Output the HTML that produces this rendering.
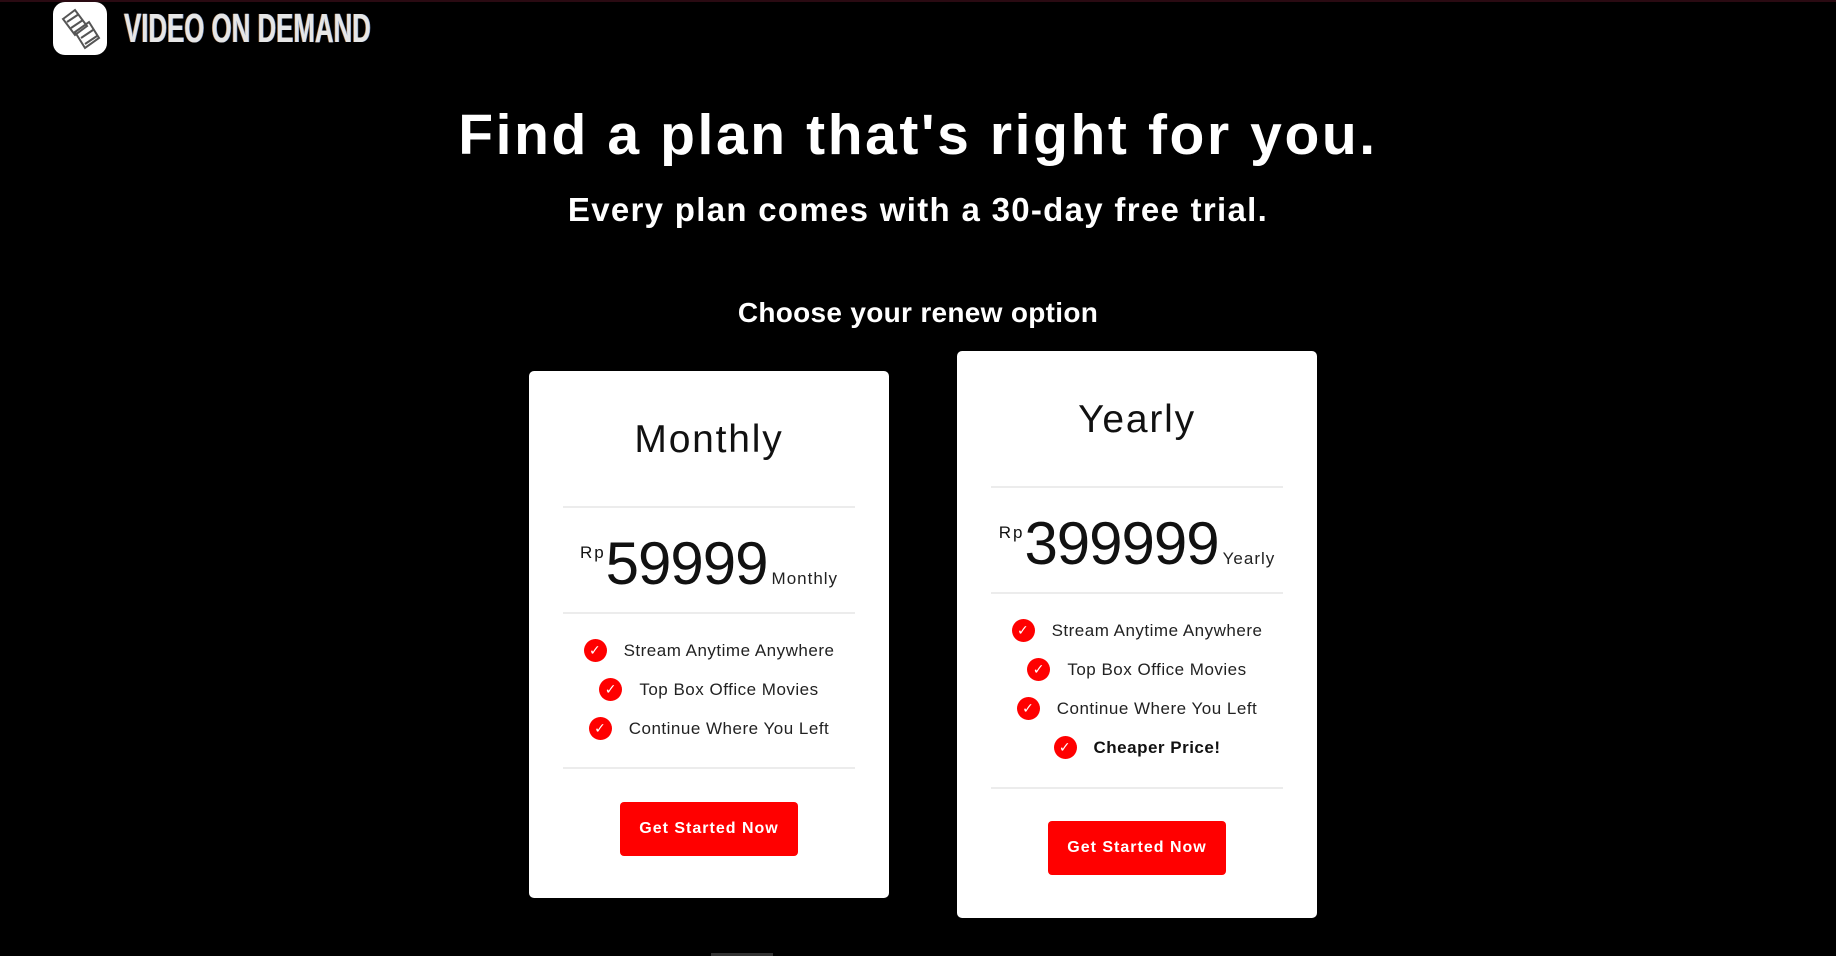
<!DOCTYPE html>
<html><head><meta charset="utf-8"><style>
*{margin:0;padding:0;box-sizing:border-box}
html,body{width:1836px;height:956px;background:#000;overflow:hidden;font-family:"Liberation Sans","DejaVu Sans",sans-serif}
.topline{position:absolute;left:0;top:0;width:1836px;height:2px;background:#2a0a12}
.logo{position:absolute;left:53px;top:2px;width:54px;height:53px;background:#fff;border-radius:12px}
.brand{position:absolute;left:124px;top:5px;font-size:41px;font-weight:bold;color:#e6e6e6;transform:scaleX(0.63);transform-origin:left top;white-space:nowrap;text-shadow:1px 0 #6b8cc0,-1px 0 #a07040}
.c{position:absolute;left:0;width:1836px;text-align:center;color:#fff;white-space:nowrap}
.h1{top:102px;font-size:57px;font-weight:bold;letter-spacing:2.6px}
.h2{top:191px;font-size:33px;font-weight:bold;letter-spacing:1.3px}
.h3{top:297px;font-size:28px;font-weight:bold;letter-spacing:0.3px}
.card{position:absolute;background:#fff;border-radius:5px;width:360px}
.card .t{position:absolute;top:47px;left:0;width:100%;text-align:center;font-size:39px;line-height:44px;color:#111;letter-spacing:1.8px}
.hr{position:absolute;left:34px;right:34px;height:2px;background:#ececec}
.price{position:absolute;top:152px;left:0;width:100%;text-align:center;color:#111;white-space:nowrap;line-height:60px}
.price .rp{font-size:17px;vertical-align:26px;letter-spacing:2px}
.price .n{font-size:60px;letter-spacing:-1px}
.price .p{font-size:17px;letter-spacing:1px;margin-left:4px;color:#222}
.feat{position:absolute;left:0;width:100%;height:39px;display:flex;justify-content:center;align-items:center;font-size:17px;color:#222;letter-spacing:0.5px}
.ic{width:23px;height:23px;border-radius:50%;background:#f00;color:#fff;font-size:14px;display:flex;align-items:center;justify-content:center;margin-right:17px}
.btn{position:absolute;left:91px;width:178px;height:54px;background:#f00;border-radius:4px;color:#fff;font-weight:bold;font-size:16px;letter-spacing:1px;display:flex;align-items:center;justify-content:center}
.bar{position:absolute;left:711px;top:953px;width:62px;height:3px;background:#333}
</style></head><body>
<div class="topline"></div>
<div class="logo"><svg width="54" height="53" viewBox="0 0 54 53"><g fill="none" stroke="#555" stroke-width="2"><path d="M10 17 L22 8 L34 24 L22 33 Z"/><path d="M22 30 L36 20 L46 36 L32 46 Z"/><path d="M14 20 L26 12 M18 26 L30 18 M28 36 L40 28 M32 42 L44 34"/></g></svg></div>
<div class="brand">VIDEO ON DEMAND</div>
<div class="c h1">Find a plan that's right for you.</div>
<div class="c h2">Every plan comes with a 30-day free trial.</div>
<div class="c h3">Choose your renew option</div>

<div class="card" style="left:529px;top:371px;height:527px">
<div class="t">Monthly</div>
<div class="hr" style="top:135px"></div>
<div class="price"><span class="rp">Rp</span><span class="n">59999</span><span class="p">Monthly</span></div>
<div class="hr" style="top:241px"></div>
<div class="feat" style="top:260px"><span class="ic">✓</span>Stream Anytime Anywhere</div>
<div class="feat" style="top:299px"><span class="ic">✓</span>Top Box Office Movies</div>
<div class="feat" style="top:338px"><span class="ic">✓</span>Continue Where You Left</div>
<div class="hr" style="top:396px"></div>
<div class="btn" style="top:431px">Get Started Now</div>
</div>

<div class="card" style="left:957px;top:351px;height:567px">
<div class="t">Yearly</div>
<div class="hr" style="top:135px"></div>
<div class="price"><span class="rp">Rp</span><span class="n">399999</span><span class="p">Yearly</span></div>
<div class="hr" style="top:241px"></div>
<div class="feat" style="top:260px"><span class="ic">✓</span>Stream Anytime Anywhere</div>
<div class="feat" style="top:299px"><span class="ic">✓</span>Top Box Office Movies</div>
<div class="feat" style="top:338px"><span class="ic">✓</span>Continue Where You Left</div>
<div class="feat" style="top:377px;font-weight:bold;color:#111"><span class="ic">✓</span>Cheaper Price!</div>
<div class="hr" style="top:436px"></div>
<div class="btn" style="top:470px">Get Started Now</div>
</div>
<div class="bar"></div>
</body></html>
